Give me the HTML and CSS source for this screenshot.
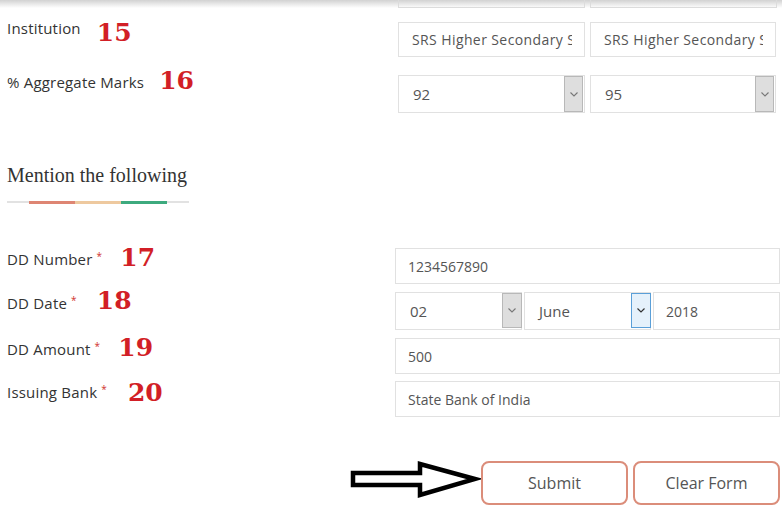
FILE: index.html
```html
<!DOCTYPE html>
<html>
<head>
<meta charset="utf-8">
<link rel="stylesheet" href="styles.css">
</head>
<body>
<div class="page">
  <div class="prev-row">
    <div class="prev-box"></div>
    <div class="prev-box"></div>
  </div>

  <div class="row row-inst">
    <div class="label-col edu"><span class="label">Institution</span><span class="num num-low">15</span></div>
    <div class="fields pair">
      <input class="input w1" type="text" value="SRS Higher Secondary School" readonly>
      <input class="input w2" type="text" value="SRS Higher Secondary School" readonly>
    </div>
  </div>

  <div class="row row-marks">
    <div class="label-col edu"><span class="label">% Aggregate Marks</span><span class="num num-marks">16</span></div>
    <div class="fields pair">
      <div class="select tall w1"><span class="val">92</span><span class="sbtn"><svg width="8" height="5" viewBox="0 0 8 5"><polyline points="0.5,0.5 4,4 7.5,0.5" fill="none" stroke="#777" stroke-width="1.1"/></svg></span></div>
      <div class="select tall w2"><span class="val">95</span><span class="sbtn"><svg width="8" height="5" viewBox="0 0 8 5"><polyline points="0.5,0.5 4,4 7.5,0.5" fill="none" stroke="#777" stroke-width="1.1"/></svg></span></div>
    </div>
  </div>

  <h2 class="heading">Mention the following</h2>
  <div class="rule"><span class="seg seg-red"></span><span class="seg seg-sand"></span><span class="seg seg-green"></span></div>

  <div class="row dd dd-first">
    <div class="label-col ddl"><span class="label">DD Number<span class="req">*</span></span><span class="num">17</span></div>
    <div class="fields"><input class="input full" type="text" value="1234567890" readonly></div>
  </div>

  <div class="row dd">
    <div class="label-col ddl"><span class="label">DD Date<span class="req">*</span></span><span class="num num-date">18</span></div>
    <div class="fields date">
      <div class="select dsel"><span class="val">02</span><span class="sbtn dbtn"><svg width="8" height="5" viewBox="0 0 8 5"><polyline points="0.5,0.5 4,4 7.5,0.5" fill="none" stroke="#777" stroke-width="1.1"/></svg></span></div>
      <div class="select dsel"><span class="val">June</span><span class="sbtn dbtn active"><svg width="8" height="5" viewBox="0 0 8 5"><polyline points="0.5,0.5 4,4 7.5,0.5" fill="none" stroke="#333" stroke-width="1.2"/></svg></span></div>
      <input class="input year" type="text" value="2018" readonly>
    </div>
  </div>

  <div class="row dd">
    <div class="label-col ddl"><span class="label">DD Amount<span class="req">*</span></span><span class="num">19</span></div>
    <div class="fields"><input class="input full" type="text" value="500" readonly></div>
  </div>

  <div class="row dd dd-bank">
    <div class="label-col ddl"><span class="label">Issuing Bank<span class="req">*</span></span><span class="num num-bank">20</span></div>
    <div class="fields"><input class="input full" type="text" value="State Bank of India" readonly></div>
  </div>

  <div class="actions">
    <svg class="arrow" width="132" height="44" viewBox="0 0 132 44">
      <polygon points="4,15 71,15 71,6 126,21 71,37 71,27 4,27" fill="#fff" stroke="#000" stroke-width="4.5" stroke-linejoin="miter"/>
    </svg>
    <button class="btn" type="button">Submit</button>
    <button class="btn" type="button">Clear Form</button>
  </div>
</div>
</body>
</html>
```

FILE: styles.css
```css
html, body {
  margin: 0;
  padding: 0;
  background: #fff;
}
body {
  width: 782px;
  height: 505px;
  overflow: hidden;
  font-family: "Open Sans", "Liberation Sans", sans-serif;
  color: #333;
}
.page {
  padding: 0 2px 0 7px;
}
.prev-row {
  display: flex;
  gap: 5px;
  height: 8px;
  margin: 0 -2px 0 -7px;
  padding-left: 398px;
  background: linear-gradient(#d2d2d2, rgba(255, 255, 255, 0));
}
.prev-box {
  width: 187px;
  box-sizing: border-box;
  border: 1px solid #dcdcdc;
  border-top: 0;
}
.row {
  display: flex;
  align-items: flex-start;
}
.row-inst {
  margin-top: 10px;
}
.row-inst .fields {
  margin-top: 4px;
}
.row-marks {
  margin-top: 15px;
}
.row-marks .fields {
  margin-top: 3px;
}
.label-col {
  display: flex;
  align-items: flex-start;
  flex-shrink: 0;
}
.label-col.edu {
  width: 391px;
}
.label-col.ddl {
  width: 388px;
  margin-top: 1px;
}
.label {
  font-size: 15px;
  line-height: 20px;
  letter-spacing: 0.2px;
  color: #333;
  white-space: nowrap;
}
.req {
  color: #d0312d;
  font-size: 10px;
  line-height: 0;
  vertical-align: 5px;
  margin-left: 4px;
}
.num {
  font-family: "DejaVu Serif", "Liberation Serif", serif;
  font-weight: bold;
  font-size: 25px;
  line-height: 26px;
  color: #d21f26;
  margin-left: 18px;
  margin-top: -4px;
}
.num-low {
  margin-top: 2px;
  margin-left: 16px;
}
.num-marks {
  margin-left: 15px;
}
.num-date {
  margin-top: -5px;
  margin-left: 20px;
}
.num-bank {
  margin-top: -2px;
  margin-left: 21px;
}
.fields {
  display: flex;
}
.pair {
  gap: 5px;
}
.date {
  gap: 2px;
}
.input {
  box-sizing: border-box;
  border: 1px solid #e1e1e1;
  border-radius: 0;
  background: #fff;
  font-family: "Open Sans", "Liberation Sans", sans-serif;
  font-size: 14px;
  color: #555;
  padding: 0 12px;
  margin: 0;
  outline: none;
  height: 36px;
}
.row-inst .input {
  height: 35px;
  padding-left: 13px;
  letter-spacing: 0.4px;
}
.w1 {
  width: 187px;
}
.w2 {
  width: 186px;
}
.full {
  width: 385px;
}
.year {
  width: 127px;
  height: 38px;
}
.select {
  box-sizing: border-box;
  display: flex;
  align-items: center;
  border: 1px solid #e1e1e1;
  height: 38px;
  padding-left: 14px;
  font-size: 15px;
  color: #555;
  background: #fff;
}
.select .val {
  flex: 1;
}
.sbtn {
  box-sizing: border-box;
  align-self: stretch;
  width: 19px;
  margin-right: 1px;
  background: #dedede;
  border: 1px solid #b8b8b8;
  display: flex;
  align-items: center;
  justify-content: center;
}
.dsel {
  width: 127px;
}
.dbtn {
  width: 20px;
  margin-right: -1px;
  margin-bottom: 1px;
}
.dbtn.active {
  background: #e5f1fb;
  border-color: #5a9fd8;
}
.heading {
  font-family: "Liberation Serif", "DejaVu Serif", serif;
  font-weight: normal;
  font-size: 20px;
  line-height: 24px;
  color: #333;
  margin: 50px 0 0;
}
.rule {
  display: flex;
  width: 182px;
  height: 3px;
  margin-top: 14px;
  padding-left: 22px;
  box-sizing: border-box;
  background: linear-gradient(#fff 0 0.5px, #e2e2e2 0.5px 2.5px, #fff 2.5px);
}
.seg {
  width: 46px;
  height: 3px;
}
.seg-red {
  background: #de8573;
}
.seg-sand {
  background: #eec99f;
}
.seg-green {
  background: #3daa7e;
}
.dd {
  margin-top: 8px;
}
.dd-first {
  margin-top: 44px;
}
.dd-bank {
  margin-top: 7px;
}
.actions {
  display: flex;
  justify-content: flex-end;
  align-items: flex-start;
  gap: 5px;
  margin-top: 41px;
}
.arrow {
  display: block;
  margin-right: -5px;
}
.btn {
  box-sizing: border-box;
  width: 147px;
  height: 44px;
  margin-top: 3px;
  background: #fff;
  border: 2px solid #db8d7a;
  border-radius: 8px;
  font-family: "Open Sans", "Liberation Sans", sans-serif;
  font-size: 16px;
  color: #555;
  padding: 0;
}
```
